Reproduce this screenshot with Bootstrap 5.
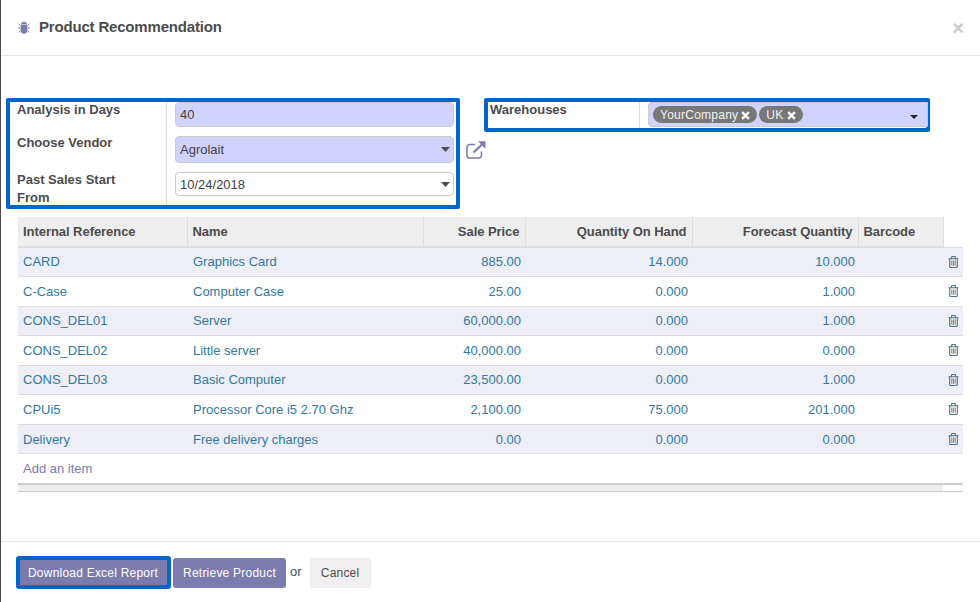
<!DOCTYPE html>
<html lang="en">
<head>
    <meta charset="UTF-8">
    <meta name="viewport" content="width=device-width, initial-scale=1.0">
    <title>Product Recommendation</title>
    <link href="https://cdn.jsdelivr.net/npm/bootstrap@5.3.0/dist/css/bootstrap.min.css" rel="stylesheet">
    <style>
        html, body { height: 100%; }
        body {
            background-color: #4a4648;
            font-family: "Liberation Sans", Arial, sans-serif;
            font-size: 13px;
            color: #4c4c4c;
            overflow: hidden;
        }
        .wizard {
            height: 602px;
            margin: 0 1px;
            border: 0;
            border-radius: 0;
            background: #fff;
            color: #4c4c4c;
        }
        .wizard .modal-header {
            height: 56px;
            padding: 0 17px;
            border-bottom: 1px solid #e5e5e5;
            border-radius: 0;
        }
        .wizard-title { font-size: 15px; font-weight: 700; color: #4c4c4c; margin: 0 0 1px 9px; letter-spacing: -.18px; }
        .close-mark { font-size: 20px; font-weight: 700; color: #c9c9c9; line-height: 1; margin: 0 0 0 auto; padding: 0; border: 0; background: none; }
        .wizard .modal-body { padding: 42px 0 0 5px; overflow: hidden; }
        .wizard .modal-footer {
            height: 61px;
            padding: 1px 0 0 15px;
            border-top: 1px solid #e5e5e5;
            justify-content: flex-start;
            flex-wrap: nowrap;
            border-radius: 0;
        }
        .wizard .modal-footer > * { margin: 0; }

        .blue-box { border: 4px solid #0066cc; border-radius: 2px; }
        .left-box {
            width: 454px;
            height: 111px;
            display: grid;
            grid-template-columns: 157px 1fr;
            grid-template-rows: 33px 36px 34px;
        }
        .right-box {
            width: 446px;
            height: 34px;
            display: grid;
            grid-template-columns: 152px 1fr;
            grid-template-rows: 26px;
        }
        .field-label {
            border-right: 1px solid #ddd;
            padding-left: 7px;
            font-weight: 700;
            line-height: 18px;
            color: #4c4c4c;
        }
        .field-label span { display: block; margin-top: -1px; }
        .field-label span.two-line { margin-top: 0; }
        .right-box .field-label { padding-left: 2px; }
        .field-cell { padding: 0 2px 0 8px; }
        .form-control.req-input, .form-select.req-input, .form-select.date-input {
            font-size: 13px;
            color: #404040;
            border: 1px solid #ccc;
            border-radius: 4px;
            padding: 0 4px;
            min-height: 0;
            box-shadow: none;
        }
        .form-control.req-input { background-color: #d2d2ff; height: 25px; }
        .form-select.req-input, .form-select.date-input {
            background-image: url("data:image/svg+xml,%3csvg xmlns='http://www.w3.org/2000/svg' width='9' height='5'%3e%3cpath fill='%234c4c4c' d='M0 0h9L4.500 5z'/%3e%3c/svg%3e");
            background-size: 9px 5px;
            background-position: right 3px center;
        }
        .form-select.req-input { background-color: #d2d2ff; height: 27px; margin-top: 1px; }
        .form-select.date-input { background-color: #fff; height: 24px; margin-top: 1px; padding-top: 1px; }
        .ext-slot { width: 24px; padding: 41px 0 0 6px; flex: none; color: #7c7bad; overflow: visible; position: relative; z-index: 1; }
        .tag-field {
            height: 25px;
            margin-right: -2px;
            background: #d2d2ff;
            border: 1px solid #ccc;
            border-radius: 4px 0 0 4px;
            padding: 0 4px;
            gap: 2px;
        }
        .tag-pill {
            height: 17px;
            background: #777;
            color: #f4f4f4;
            border-radius: 9px;
            padding: 1px 7px 0;
            font-size: 12px;
            line-height: 16px;
            letter-spacing: .25px;
            gap: 3px;
        }
        .tag-caret {
            margin-left: auto;
            margin-right: 5px;
            border-top: 4px solid #222;
            border-left: 4px solid transparent;
            border-right: 4px solid transparent;
            position: relative;
            top: 2px;
        }

        .lines-table {
            width: 945px;
            margin: 8px 0 0 12px;
            table-layout: fixed;
            border-collapse: collapse;
            font-size: 13px;
            --bs-table-bg: transparent;
        }
        .lines-table th, .lines-table td {
            padding: 0 5px;
            border-bottom: 1px solid #ddd;
            vertical-align: middle;
            white-space: nowrap;
            color: #33789f;
            box-shadow: none;
        }
        .lines-table thead th {
            height: 30px;
            background: #eee;
            border-bottom: 2px solid #ddd;
            border-right: 1px solid #ddd;
            color: #4c4c4c;
            font-weight: 700;
            letter-spacing: -.05px;
        }
        .lines-table thead th.blank-head { background: #fff; border-right: 0; border-bottom: 1px solid #ddd; }
        .lines-table tbody td { height: 29.5px; }
        .lines-table tbody td.name-cell { padding-left: 6px; }
        .lines-table tbody td.text-end { padding-right: 4px; }
        .lines-table tbody td.fore-cell { padding-right: 3px; }
        .lines-table tbody tr:nth-child(odd):not(.add-row) td { background: #eeeef6; }
        .lines-table tbody tr:nth-child(7) td { padding-top: 1px; }
        .lines-table .add-row td { border-bottom: 0; height: 30px; }
        .add-link { color: #7c7bad; text-decoration: none; }
        .lines-table tbody td.trash-cell { padding: 0 4px 0 0; }
        .trash-cell svg { display: block; margin-left: auto; }
        .lines-table tfoot td {
            height: 8px;
            padding: 0;
            background: #eee;
            border-top: 2px solid #ccc;
            border-bottom: 1px solid #ccc;
        }
        .lines-table tfoot td.blank-foot { background: #fff; }

        .btn.act-btn {
            background: #7c7bad;
            color: #fff;
            font-size: 12px;
            padding: 0;
            width: 113px;
            height: 30px;
            border-radius: 3px;
            border: 0;
            letter-spacing: .22px;
            white-space: nowrap;
        }
        .btn.act-btn.outlined { border: 4px solid #0066cc; height: 33px; width: 155px; padding-right: 1px; }
        .btn.act-btn.next-btn { margin-left: 2px; }
        .btn.plain-btn { background: #f0eeee; color: #4c4c4c; font-size: 12px; width: 61px; height: 30px; padding: 0; border: 0; border-radius: 3px; letter-spacing: .2px; }
        .or-word { padding: 0 8px 2px 4px; }
    </style>
</head>
<body>
    <div class="modal-content wizard d-flex flex-column">
        <div class="modal-header d-flex align-items-center">
            <svg width="12" height="13" viewBox="0 0 12 13" fill="#7c7bad">
                <path d="M3.200 3.200a2.800 2.400 0 0 1 5.600 0z"/>
                <path d="M2.700 3.800h6.600v5.100c0 2.200-1.300 3.600-3.300 3.800-2-.2-3.300-1.600-3.300-3.800z"/>
                <path d="M2.300 4.500 .6 2.900M9.700 4.500l1.700-1.600M2.500 7H.2M9.500 7h2.300M2.800 9.500 .8 11.400M9.200 9.500l2 1.900" stroke="#7c7bad" stroke-width="1" fill="none"/>
            </svg>
            <h4 class="wizard-title">Product Recommendation</h4>
            <button type="button" class="close-mark">×</button>
        </div>

        <div class="modal-body flex-grow-1">
            <div class="d-flex align-items-start">
                <div class="blue-box left-box">
                    <div class="field-label"><span>Analysis in Days</span></div>
                    <div class="field-cell"><input type="text" class="form-control req-input" value="40"></div>
                    <div class="field-label"><span>Choose Vendor</span></div>
                    <div class="field-cell"><select class="form-select req-input"><option>Agrolait</option></select></div>
                    <div class="field-label"><span class="two-line">Past Sales Start<br>From</span></div>
                    <div class="field-cell"><select class="form-select date-input"><option>10/24/2018</option></select></div>
                </div>
                <div class="ext-slot">
                    <svg width="20" height="18" viewBox="0 0 20 18" fill="none" stroke="currentColor" stroke-width="1.600">
                        <path d="M15.500 10.500v4a2.500 2.500 0 0 1-2.500 2.500H3.500A2.500 2.500 0 0 1 1 14.500V6a2.500 2.500 0 0 1 2.500-2.500H9"/>
                        <path d="M7.500 11.500 16 3.500" stroke-width="2.200"/>
                        <path d="M12 .3h7.500v7.500z" fill="currentColor" stroke="none"/>
                    </svg>
                </div>
                <div class="blue-box right-box">
                    <div class="field-label"><span>Warehouses</span></div>
                    <div class="field-cell pe-0">
                        <div class="tag-field d-flex align-items-center">
                            <span class="tag-pill d-inline-flex align-items-center">YourCompany
                                <svg width="9" height="9" viewBox="0 0 9 9"><path d="M1.200 1.200l6.600 6.600M7.800 1.200 1.200 7.800" stroke="#fff" stroke-width="2.400"/></svg></span>
                            <span class="tag-pill d-inline-flex align-items-center">UK
                                <svg width="9" height="9" viewBox="0 0 9 9"><path d="M1.200 1.200l6.600 6.600M7.800 1.200 1.200 7.800" stroke="#fff" stroke-width="2.400"/></svg></span>
                            <span class="tag-caret"></span>
                        </div>
                    </div>
                </div>
            </div>

            <table class="table lines-table mb-0">
                <colgroup>
                    <col style="width:169px"><col style="width:236px"><col style="width:102px"><col style="width:167px"><col style="width:166px"><col style="width:85px"><col style="width:20px">
                </colgroup>
                <thead>
                    <tr>
                        <th>Internal Reference</th>
                        <th>Name</th>
                        <th class="text-end">Sale Price</th>
                        <th class="text-end">Quantity On Hand</th>
                        <th class="text-end">Forecast Quantity</th>
                        <th>Barcode</th>
                        <th class="blank-head"></th>
                    </tr>
                </thead>
                <tbody id="lineRows"></tbody>
                <tfoot>
                    <tr><td colspan="6"></td><td class="blank-foot"></td></tr>
                </tfoot>
            </table>
        </div>

        <div class="modal-footer">
            <button type="button" class="btn act-btn outlined">Download Excel Report</button>
            <button type="button" class="btn act-btn next-btn">Retrieve Product</button>
            <span class="or-word">or</span>
            <button type="button" class="btn plain-btn">Cancel</button>
        </div>
    </div>

    <script>
        let lines = [
            ["CARD", "Graphics Card", "885.00", "14.000", "10.000"],
            ["C-Case", "Computer Case", "25.00", "0.000", "1.000"],
            ["CONS_DEL01", "Server", "60,000.00", "0.000", "1.000"],
            ["CONS_DEL02", "Little server", "40,000.00", "0.000", "0.000"],
            ["CONS_DEL03", "Basic Computer", "23,500.00", "0.000", "1.000"],
            ["CPUi5", "Processor Core i5 2.70 Ghz", "2,100.00", "75.000", "201.000"],
            ["Delivery", "Free delivery charges", "0.00", "0.000", "0.000"]
        ];
        let trash = `<svg width="11" height="12" viewBox="0 0 11 12" fill="none" stroke="#4a7488" stroke-width="1.100"><path d="M.5 2.800h10M3.500 2.800V1.500q0-1 1-1h2q1 0 1 1v1.300M1.700 2.800v7.700q0 1 1 1h5.600q1 0 1-1V2.800"/><path d="M3.800 4.500v5.300M5.500 4.500v5.300M7.200 4.500v5.300" stroke="#8a8a7a"/></svg>`;
        let rows = lines.map(r => `<tr>
            <td>${r[0]}</td><td class="name-cell">${r[1]}</td>
            <td class="text-end">${r[2]}</td><td class="text-end">${r[3]}</td><td class="text-end fore-cell">${r[4]}</td>
            <td></td><td class="trash-cell">${trash}</td></tr>`).join("");
        rows += `<tr class="add-row"><td colspan="7"><a href="#" class="add-link">Add an item</a></td></tr>`;
        document.getElementById("lineRows").innerHTML = rows;
    </script>
    <script src="https://cdn.jsdelivr.net/npm/bootstrap@5.3.0/dist/js/bootstrap.bundle.min.js"></script>
</body>
</html>
